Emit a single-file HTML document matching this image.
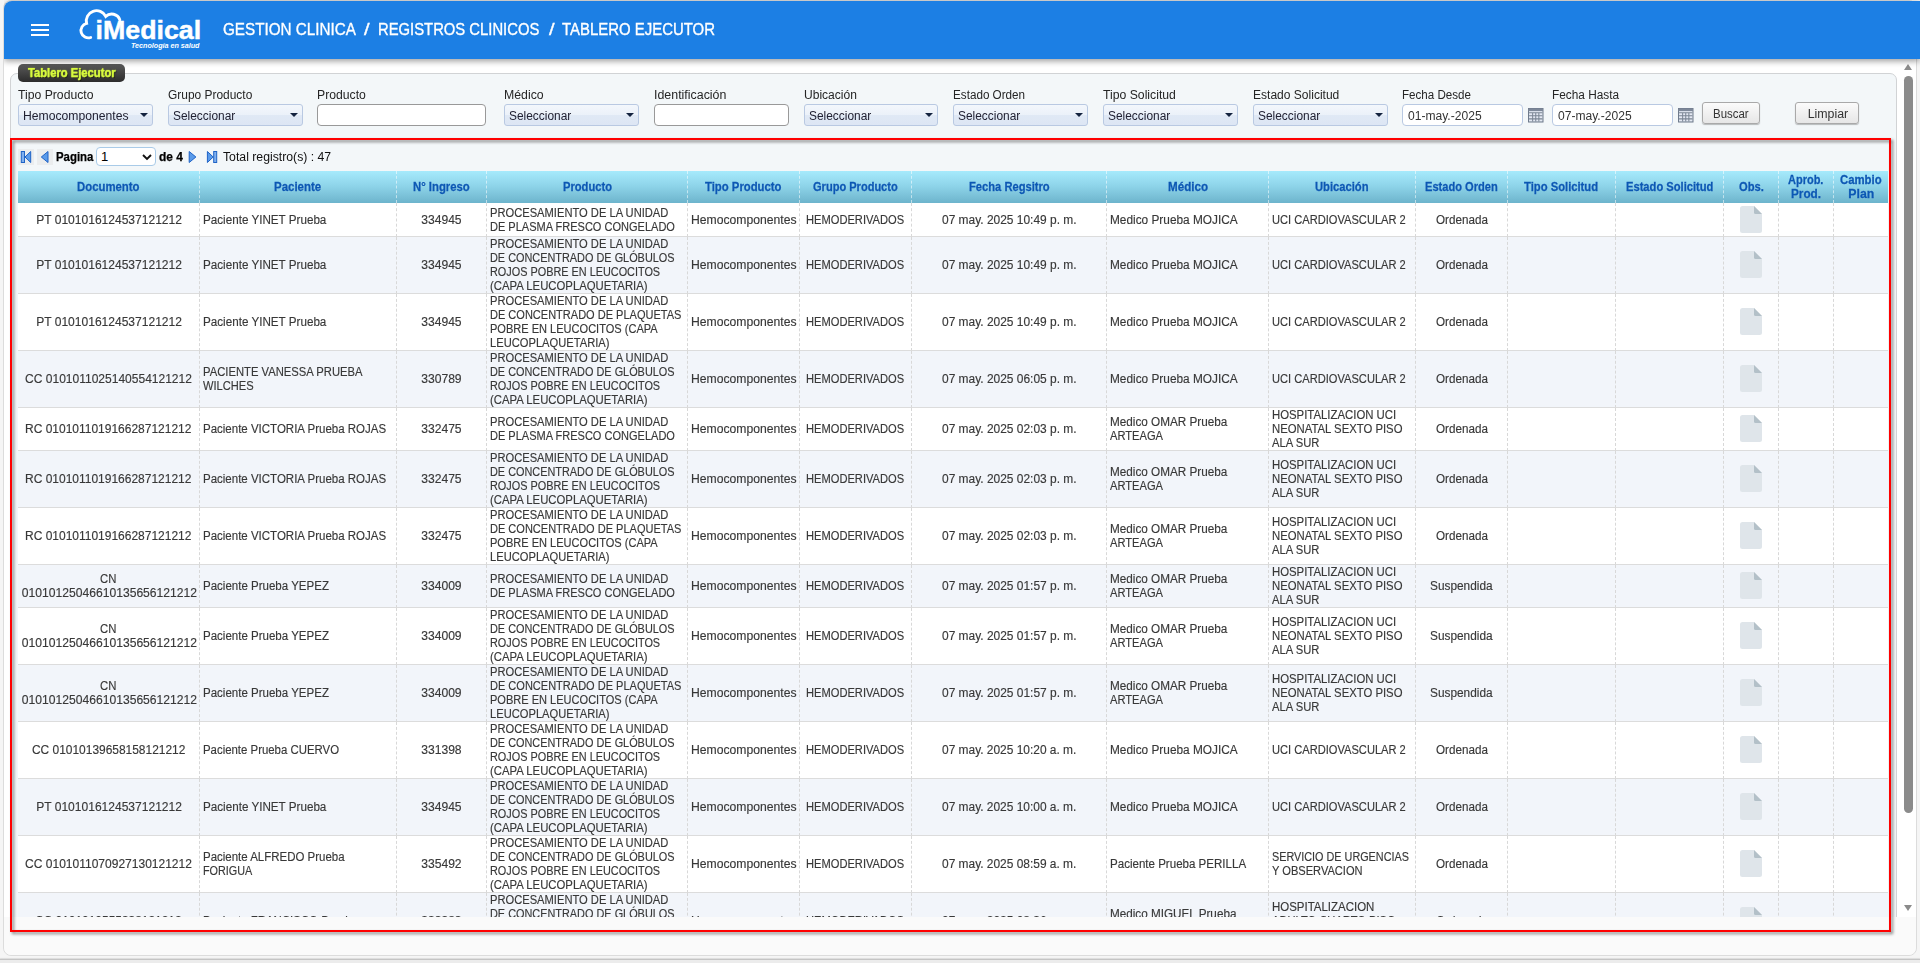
<!DOCTYPE html>
<html lang="es">
<head>
<meta charset="utf-8">
<title>Tablero Ejecutor</title>
<style>
*{box-sizing:border-box}
html,body{margin:0;padding:0}
body{width:1920px;height:963px;overflow:hidden;position:relative;background:#f5f5f5;font-family:"Liberation Sans",sans-serif;font-size:12px;color:#333}
#frame{position:absolute;left:3px;top:0;width:1914px;height:956px;background:#fafafa;border:1px solid #dcdcdc;border-radius:8px}
#botline{position:absolute;left:0;top:959px;width:1920px;height:4px;background:#ececec;border-top:1px solid #c4c4c4;box-shadow:0 -1px 1px rgba(0,0,0,.1)}
#view{position:absolute;left:4px;top:59px;width:1912px;height:858px;background:#fff;overflow:hidden}
#hdr{position:absolute;left:4px;top:1px;width:1916px;height:58px;background:#1c7fe4;border-top-left-radius:8px;box-shadow:0 2px 6px rgba(0,0,0,.4);clip-path:inset(-1px 0 -14px 0)}
#hdr .bar{position:absolute;left:27px;width:18px;height:2px;background:#fff}
#crumb{position:absolute;left:0;top:0;color:#fff;font-size:16.5px;line-height:20px;white-space:nowrap;-webkit-text-stroke:0.350px #fff}
#crumb>span{position:absolute;top:18px}
#logo{position:absolute;left:-4px;top:-1px}
#fs{position:absolute;left:10px;top:73px;width:1887px;height:870px;border:1px solid #d1d3d5;border-radius:7px;background:#f3f7f9}
#leg{position:absolute;left:18px;top:64px;width:107px;height:18px;border-radius:5px;background:linear-gradient(#5a5a5a,#2c2c2c);color:#d8fa3e;font-weight:bold;font-size:12px;line-height:18px;text-align:center;text-shadow:0 0 1.500px rgba(216,250,62,.85),1px 1px 1px rgba(0,0,0,.7);-webkit-text-stroke:0.250px #d8fa3e}
.lab{position:absolute;top:88px;font-size:12px;line-height:14px;white-space:nowrap;color:#252525}
.sel{position:absolute;top:104px;height:22px;border:1px solid #b9c9e2;border-radius:3px;background:linear-gradient(#f3f7fc 0%,#ebf1f9 50%,#e0e9f5 50%,#dde6f4 100%);font-size:12px;line-height:20px;padding:0.500px 0 0 4px;color:#223;white-space:nowrap}
.sel i{position:absolute;right:4.500px;top:7.500px;width:0;height:0;border-left:4px solid transparent;border-right:4px solid transparent;border-top:4.500px solid #14233f}
.inp{position:absolute;top:104px;height:22px;border:1px solid #999;border-radius:4px;background:#fff}
.dat{position:absolute;top:104px;height:22px;border:1px solid #b9c9e2;border-radius:4px;background:#fff;font-size:12px;line-height:23px;padding-left:5px;color:#333}
.cal{position:absolute;top:108px;width:15px;height:14px}
.cal svg{display:block}
.btn{position:absolute;top:102px;height:22px;border:1px solid #a9a9a9;border-radius:3px;background:linear-gradient(#fbfbfb,#e6e6e6);box-shadow:0 1px 1px rgba(0,0,0,.25);font-size:12px;line-height:22px;text-align:center;color:#333}
#pg{position:absolute;left:0;top:0}
#pg>b,#pg>span{position:absolute;top:150px;line-height:14px;white-space:nowrap;color:#111}
#pg>b{color:#000;-webkit-text-stroke:0.250px #000}
#pgsel{position:absolute;left:96px;top:147px;width:59.500px;height:18.500px;border:1px solid #a9cbe8;border-radius:4px;background:#fff;font-size:13px;line-height:17px;padding-left:4px;color:#000}
table{position:absolute;left:18px;top:171px;width:1870px;border-collapse:separate;border-spacing:0;table-layout:fixed;font-size:12px;line-height:14px}
th{height:32px;padding:0;background:linear-gradient(#a6eafc 0%,#8fd5ea 45%,#6db4cc 100%);color:#0b58b4;-webkit-text-stroke:0.300px #0b58b4;font-weight:bold;text-align:center;border-left:1px dashed rgba(255,255,255,.55);text-shadow:0 0 1px rgba(255,255,255,.5)}
th:first-child{border-left:0}
td{padding:0 2px 0 3px;border-left:1px dashed #d8d8d8;border-bottom:1px solid #dcdcdc;vertical-align:middle;white-space:nowrap;color:#383838;-webkit-text-stroke:0.150px #383838;overflow:hidden}
td:first-child{border-left:0}
td.c{text-align:center;padding:0}
.t{display:inline-block;white-space:nowrap;transform-origin:0 50%;vertical-align:top}
.b{font-weight:bold}
tr.o td{background:#fff}
tr.e td{background:#f2f5fa}
svg.doc{display:block;margin:0 auto;position:relative;left:-0.5px;top:-0.5px}
#red{position:absolute;left:10px;top:138px;width:1881px;height:794px;border:2px solid #ff0000;filter:drop-shadow(2.500px 2.500px 1.500px rgba(0,0,0,.5))}
#sb{position:absolute;left:1897px;top:0;width:15px;height:858px;background:#fff}
#thumb{position:absolute;left:1904px;top:76px;width:9px;height:737px;border-radius:4.5px;background:#8b8b8b}
.arr{position:absolute;left:1904px;width:0;height:0;border-left:4.5px solid transparent;border-right:4.5px solid transparent}
</style>
</head>
<body>
<div id="frame"></div>
<div id="botline"></div>
<div id="view"></div>
<div id="fs"></div>
<div id="leg"><span class="t b" style="width:87.6px;transform:scaleX(0.9339)">Tablero Ejecutor</span></div>
<div class="lab" style="left:18px"><span class="t" style="width:75.5px;transform:scaleX(1.0168)">Tipo Producto</span></div>
<div class="sel" style="left:18px;width:135px"><span class="t" style="width:105.6px;transform:scaleX(1.0144)">Hemocomponentes</span><i></i></div>
<div class="lab" style="left:168px"><span class="t" style="width:84.3px;transform:scaleX(0.9949)">Grupo Producto</span></div>
<div class="sel" style="left:168px;width:135px"><span class="t" style="width:62.3px;transform:scaleX(0.9931)">Seleccionar</span><i></i></div>
<div class="lab" style="left:317px"><span class="t" style="width:48.9px;transform:scaleX(1.0180)">Producto</span></div>
<div class="inp" style="left:317px;width:169px"></div>
<div class="lab" style="left:504px"><span class="t" style="width:39.6px;transform:scaleX(1.0246)">Médico</span></div>
<div class="sel" style="left:504px;width:135px"><span class="t" style="width:62.3px;transform:scaleX(0.9931)">Seleccionar</span><i></i></div>
<div class="lab" style="left:654px"><span class="t" style="width:72.4px;transform:scaleX(1.0334)">Identificación</span></div>
<div class="inp" style="left:654px;width:135px"></div>
<div class="lab" style="left:804px"><span class="t" style="width:52.9px;transform:scaleX(1.0036)">Ubicación</span></div>
<div class="sel" style="left:804px;width:134px"><span class="t" style="width:62.3px;transform:scaleX(0.9931)">Seleccionar</span><i></i></div>
<div class="lab" style="left:953px"><span class="t" style="width:72.1px;transform:scaleX(0.9736)">Estado Orden</span></div>
<div class="sel" style="left:953px;width:135px"><span class="t" style="width:62.3px;transform:scaleX(0.9931)">Seleccionar</span><i></i></div>
<div class="lab" style="left:1103px"><span class="t" style="width:72.9px;transform:scaleX(1.0182)">Tipo Solicitud</span></div>
<div class="sel" style="left:1103px;width:135px"><span class="t" style="width:62.3px;transform:scaleX(0.9931)">Seleccionar</span><i></i></div>
<div class="lab" style="left:1253px"><span class="t" style="width:86.3px;transform:scaleX(1.0029)">Estado Solicitud</span></div>
<div class="sel" style="left:1253px;width:135px"><span class="t" style="width:62.3px;transform:scaleX(0.9931)">Seleccionar</span><i></i></div>
<div class="lab" style="left:1402px"><span class="t" style="width:68.9px;transform:scaleX(0.9656)">Fecha Desde</span></div>
<div class="dat" style="left:1402px;width:121px"><span class="t" style="width:73.6px;transform:scaleX(1.0061)">01-may.-2025</span></div><div class="cal" style="left:1528px"><svg width="15.500" height="14.500" viewBox="0 0 15 14" preserveAspectRatio="none"><rect x="0.5" y="0.5" width="14" height="13" fill="#e4e9f3" stroke="#6f7b8c"/><rect x="0.500" y="0.500" width="14" height="2.500" fill="#7d8899"/><g stroke="#7a8594" stroke-width="1"><path d="M1 4.5H14M1 7.5H14M1 10.5H14M4.5 4V13M7.5 4V13M10.5 4V13"/></g></svg></div>
<div class="lab" style="left:1552px"><span class="t" style="width:67.1px;transform:scaleX(0.9860)">Fecha Hasta</span></div>
<div class="dat" style="left:1552px;width:121px"><span class="t" style="width:73.6px;transform:scaleX(1.0061)">07-may.-2025</span></div><div class="cal" style="left:1678px"><svg width="15.500" height="14.500" viewBox="0 0 15 14" preserveAspectRatio="none"><rect x="0.5" y="0.5" width="14" height="13" fill="#e4e9f3" stroke="#6f7b8c"/><rect x="0.500" y="0.500" width="14" height="2.500" fill="#7d8899"/><g stroke="#7a8594" stroke-width="1"><path d="M1 4.5H14M1 7.5H14M1 10.5H14M4.5 4V13M7.5 4V13M10.5 4V13"/></g></svg></div>
<div class="btn" style="left:1702px;width:58px"><span class="t" style="width:35.6px;transform:scaleX(0.9529)">Buscar</span></div>
<div class="btn" style="left:1795px;width:64px"><span class="t" style="width:40.6px;transform:scaleX(1.0315)">Limpiar</span></div>
<div id="pg">
<svg style="position:absolute;left:18px;top:149px" width="16" height="16" viewBox="0 0 16 16"><rect width="16" height="16" fill="#ebedee"/><rect x="3.300" y="2.500" width="3.200" height="11" fill="#7fb0ee" stroke="#1f63c6" stroke-width="1"/><path d="M12.700 2.500L7 8L12.700 13.500Z" fill="#5a9bea" stroke="#1f63c6" stroke-width="1" stroke-linejoin="round"/></svg>
<svg style="position:absolute;left:37px;top:149px" width="16" height="16" viewBox="0 0 16 16"><rect width="16" height="16" fill="#ebedee"/><path d="M11 2.500L4.300 8L11 13.500Z" fill="#5a9bea" stroke="#1f63c6" stroke-width="1" stroke-linejoin="round"/></svg>
<b style="left:56px"><span class="t b" style="width:37.4px;transform:scaleX(0.9502)">Pagina</span></b>
<div id="pgsel">1<svg style="position:absolute;left:45px;top:5.500px" width="10" height="7" viewBox="0 0 10 7"><path d="M1 1L5 5L9 1" fill="none" stroke="#111" stroke-width="1.900"/></svg></div>
<b style="left:158.500px"><span class="t b" style="width:23.9px;transform:scaleX(0.9952)">de 4</span></b>
<svg style="position:absolute;left:186px;top:149px" width="16" height="16" viewBox="0 0 16 16"><path d="M3.200 2.500L9.900 8L3.200 13.500Z" fill="#5a9bea" stroke="#1f63c6" stroke-width="1" stroke-linejoin="round"/></svg>
<svg style="position:absolute;left:205px;top:149px" width="16" height="16" viewBox="0 0 16 16"><rect x="8.700" y="2.500" width="3" height="11" fill="#7fb0ee" stroke="#1f63c6" stroke-width="1"/><path d="M2.400 2.500L8.200 8L2.400 13.500Z" fill="#5a9bea" stroke="#1f63c6" stroke-width="1" stroke-linejoin="round"/></svg>
<span style="left:223px"><span class="t" style="width:108.2px;transform:scaleX(1.0202)">Total registro(s) : 47</span></span>
</div>
<table>
<colgroup><col style="width:181px"><col style="width:197px"><col style="width:90px"><col style="width:201px"><col style="width:112px"><col style="width:112px"><col style="width:195px"><col style="width:162px"><col style="width:147px"><col style="width:92px"><col style="width:108px"><col style="width:108px"><col style="width:55px"><col style="width:55px"><col style="width:55px"></colgroup>
<thead><tr><th><span class="t b" style="width:62.5px;transform:scaleX(0.9470)">Documento</span></th><th><span class="t b" style="width:47.2px;transform:scaleX(0.9563)">Paciente</span></th><th><span class="t b" style="width:56.7px;transform:scaleX(0.9428)">N° Ingreso</span></th><th><span class="t b" style="width:49.0px;transform:scaleX(0.9303)">Producto</span></th><th><span class="t b" style="width:76.5px;transform:scaleX(0.9432)">Tipo Producto</span></th><th><span class="t b" style="width:84.7px;transform:scaleX(0.9207)">Grupo Producto</span></th><th><span class="t b" style="width:80.7px;transform:scaleX(0.9308)">Fecha Regsitro</span></th><th><span class="t b" style="width:40.0px;transform:scaleX(0.9675)">Médico</span></th><th><span class="t b" style="width:53.5px;transform:scaleX(0.9327)">Ubicación</span></th><th><span class="t b" style="width:72.8px;transform:scaleX(0.9252)">Estado Orden</span></th><th><span class="t b" style="width:74.1px;transform:scaleX(0.9367)">Tipo Solicitud</span></th><th><span class="t b" style="width:87.4px;transform:scaleX(0.9296)">Estado Solicitud</span></th><th><span class="t b" style="width:24.8px;transform:scaleX(0.9298)">Obs.</span></th><th><span class="t b" style="width:35.4px;transform:scaleX(0.9154)">Aprob.</span><br><span class="t b" style="width:30.0px;transform:scaleX(0.9781)">Prod.</span></th><th><span class="t b" style="width:41.6px;transform:scaleX(0.9451)">Cambio</span><br><span class="t b" style="width:26.0px;transform:scaleX(1.0259)">Plan</span></th></tr></thead>
<tbody>
<tr class="o" style="height:34px"><td class="c"><span class="t" style="width:145.7px;transform:scaleX(1.0032)">PT 0101016124537121212</span></td><td><span class="t" style="width:123.4px;transform:scaleX(0.9715)">Paciente YINET Prueba</span></td><td class="c"><span class="t" style="width:40.4px;transform:scaleX(1.0096)">334945</span></td><td><span class="t" style="width:178.4px;transform:scaleX(0.9298)">PROCESAMIENTO DE LA UNIDAD</span><br><span class="t" style="width:184.9px;transform:scaleX(0.9182)">DE PLASMA FRESCO CONGELADO</span></td><td><span class="t" style="width:105.6px;transform:scaleX(1.0144)">Hemocomponentes</span></td><td class="c"><span class="t" style="width:98.1px;transform:scaleX(0.9277)">HEMODERIVADOS</span></td><td class="c"><span class="t" style="width:134.6px;transform:scaleX(0.9955)">07 may. 2025 10:49 p. m.</span></td><td><span class="t" style="width:127.7px;transform:scaleX(0.9868)">Medico Prueba MOJICA</span></td><td><span class="t" style="width:133.8px;transform:scaleX(0.9260)">UCI CARDIOVASCULAR 2</span></td><td class="c"><span class="t" style="width:51.9px;transform:scaleX(0.9720)">Ordenada</span></td><td></td><td></td><td class="c"><svg class="doc" width="22" height="27" viewBox="0 0 22 27"><path d="M2.5 0H14L22 8V24.5Q22 27 19.5 27H2.5Q0 27 0 24.5V2.5Q0 0 2.5 0Z" fill="#dfe5ea"/><path d="M14 0L22 8H15.500Q14 8 14 6.500Z" fill="#b3c0c8"/></svg></td><td></td><td></td></tr>
<tr class="e" style="height:57px"><td class="c"><span class="t" style="width:145.7px;transform:scaleX(1.0032)">PT 0101016124537121212</span></td><td><span class="t" style="width:123.4px;transform:scaleX(0.9715)">Paciente YINET Prueba</span></td><td class="c"><span class="t" style="width:40.4px;transform:scaleX(1.0096)">334945</span></td><td><span class="t" style="width:178.4px;transform:scaleX(0.9298)">PROCESAMIENTO DE LA UNIDAD</span><br><span class="t" style="width:184.5px;transform:scaleX(0.9074)">DE CONCENTRADO DE GLÓBULOS</span><br><span class="t" style="width:170.1px;transform:scaleX(0.9058)">ROJOS POBRE EN LEUCOCITOS</span><br><span class="t" style="width:157.6px;transform:scaleX(0.9439)">(CAPA LEUCOPLAQUETARIA)</span></td><td><span class="t" style="width:105.6px;transform:scaleX(1.0144)">Hemocomponentes</span></td><td class="c"><span class="t" style="width:98.1px;transform:scaleX(0.9277)">HEMODERIVADOS</span></td><td class="c"><span class="t" style="width:134.6px;transform:scaleX(0.9955)">07 may. 2025 10:49 p. m.</span></td><td><span class="t" style="width:127.7px;transform:scaleX(0.9868)">Medico Prueba MOJICA</span></td><td><span class="t" style="width:133.8px;transform:scaleX(0.9260)">UCI CARDIOVASCULAR 2</span></td><td class="c"><span class="t" style="width:51.9px;transform:scaleX(0.9720)">Ordenada</span></td><td></td><td></td><td class="c"><svg class="doc" width="22" height="27" viewBox="0 0 22 27"><path d="M2.5 0H14L22 8V24.5Q22 27 19.5 27H2.5Q0 27 0 24.5V2.5Q0 0 2.5 0Z" fill="#dfe5ea"/><path d="M14 0L22 8H15.500Q14 8 14 6.500Z" fill="#b3c0c8"/></svg></td><td></td><td></td></tr>
<tr class="o" style="height:57px"><td class="c"><span class="t" style="width:145.7px;transform:scaleX(1.0032)">PT 0101016124537121212</span></td><td><span class="t" style="width:123.4px;transform:scaleX(0.9715)">Paciente YINET Prueba</span></td><td class="c"><span class="t" style="width:40.4px;transform:scaleX(1.0096)">334945</span></td><td><span class="t" style="width:178.4px;transform:scaleX(0.9298)">PROCESAMIENTO DE LA UNIDAD</span><br><span class="t" style="width:191.4px;transform:scaleX(0.9181)">DE CONCENTRADO DE PLAQUETAS</span><br><span class="t" style="width:167.6px;transform:scaleX(0.9198)">POBRE EN LEUCOCITOS (CAPA</span><br><span class="t" style="width:119.5px;transform:scaleX(0.9298)">LEUCOPLAQUETARIA)</span></td><td><span class="t" style="width:105.6px;transform:scaleX(1.0144)">Hemocomponentes</span></td><td class="c"><span class="t" style="width:98.1px;transform:scaleX(0.9277)">HEMODERIVADOS</span></td><td class="c"><span class="t" style="width:134.6px;transform:scaleX(0.9955)">07 may. 2025 10:49 p. m.</span></td><td><span class="t" style="width:127.7px;transform:scaleX(0.9868)">Medico Prueba MOJICA</span></td><td><span class="t" style="width:133.8px;transform:scaleX(0.9260)">UCI CARDIOVASCULAR 2</span></td><td class="c"><span class="t" style="width:51.9px;transform:scaleX(0.9720)">Ordenada</span></td><td></td><td></td><td class="c"><svg class="doc" width="22" height="27" viewBox="0 0 22 27"><path d="M2.5 0H14L22 8V24.5Q22 27 19.5 27H2.5Q0 27 0 24.5V2.5Q0 0 2.5 0Z" fill="#dfe5ea"/><path d="M14 0L22 8H15.500Q14 8 14 6.500Z" fill="#b3c0c8"/></svg></td><td></td><td></td></tr>
<tr class="e" style="height:57px"><td class="c"><span class="t" style="width:166.8px;transform:scaleX(1.0013)">CC 0101011025140554121212</span></td><td><span class="t" style="width:159.5px;transform:scaleX(0.9369)">PACIENTE VANESSA PRUEBA</span><br><span class="t" style="width:50.7px;transform:scaleX(0.9266)">WILCHES</span></td><td class="c"><span class="t" style="width:40.4px;transform:scaleX(1.0096)">330789</span></td><td><span class="t" style="width:178.4px;transform:scaleX(0.9298)">PROCESAMIENTO DE LA UNIDAD</span><br><span class="t" style="width:184.5px;transform:scaleX(0.9074)">DE CONCENTRADO DE GLÓBULOS</span><br><span class="t" style="width:170.1px;transform:scaleX(0.9058)">ROJOS POBRE EN LEUCOCITOS</span><br><span class="t" style="width:157.6px;transform:scaleX(0.9439)">(CAPA LEUCOPLAQUETARIA)</span></td><td><span class="t" style="width:105.6px;transform:scaleX(1.0144)">Hemocomponentes</span></td><td class="c"><span class="t" style="width:98.1px;transform:scaleX(0.9277)">HEMODERIVADOS</span></td><td class="c"><span class="t" style="width:134.6px;transform:scaleX(0.9955)">07 may. 2025 06:05 p. m.</span></td><td><span class="t" style="width:127.7px;transform:scaleX(0.9868)">Medico Prueba MOJICA</span></td><td><span class="t" style="width:133.8px;transform:scaleX(0.9260)">UCI CARDIOVASCULAR 2</span></td><td class="c"><span class="t" style="width:51.9px;transform:scaleX(0.9720)">Ordenada</span></td><td></td><td></td><td class="c"><svg class="doc" width="22" height="27" viewBox="0 0 22 27"><path d="M2.5 0H14L22 8V24.5Q22 27 19.5 27H2.5Q0 27 0 24.5V2.5Q0 0 2.5 0Z" fill="#dfe5ea"/><path d="M14 0L22 8H15.500Q14 8 14 6.500Z" fill="#b3c0c8"/></svg></td><td></td><td></td></tr>
<tr class="o" style="height:43px"><td class="c"><span class="t" style="width:166.4px;transform:scaleX(0.9988)">RC 0101011019166287121212</span></td><td><span class="t" style="width:183.1px;transform:scaleX(0.9577)">Paciente VICTORIA Prueba ROJAS</span></td><td class="c"><span class="t" style="width:40.4px;transform:scaleX(1.0096)">332475</span></td><td><span class="t" style="width:178.4px;transform:scaleX(0.9298)">PROCESAMIENTO DE LA UNIDAD</span><br><span class="t" style="width:184.9px;transform:scaleX(0.9182)">DE PLASMA FRESCO CONGELADO</span></td><td><span class="t" style="width:105.6px;transform:scaleX(1.0144)">Hemocomponentes</span></td><td class="c"><span class="t" style="width:98.1px;transform:scaleX(0.9277)">HEMODERIVADOS</span></td><td class="c"><span class="t" style="width:134.6px;transform:scaleX(0.9955)">07 may. 2025 02:03 p. m.</span></td><td><span class="t" style="width:117.4px;transform:scaleX(0.9778)">Medico OMAR Prueba</span><br><span class="t" style="width:53.0px;transform:scaleX(0.9280)">ARTEAGA</span></td><td><span class="t" style="width:124.2px;transform:scaleX(0.9469)">HOSPITALIZACION UCI</span><br><span class="t" style="width:130.5px;transform:scaleX(0.9436)">NEONATAL SEXTO PISO</span><br><span class="t" style="width:47.4px;transform:scaleX(0.9343)">ALA SUR</span></td><td class="c"><span class="t" style="width:51.9px;transform:scaleX(0.9720)">Ordenada</span></td><td></td><td></td><td class="c"><svg class="doc" width="22" height="27" viewBox="0 0 22 27"><path d="M2.5 0H14L22 8V24.5Q22 27 19.5 27H2.5Q0 27 0 24.5V2.5Q0 0 2.5 0Z" fill="#dfe5ea"/><path d="M14 0L22 8H15.500Q14 8 14 6.500Z" fill="#b3c0c8"/></svg></td><td></td><td></td></tr>
<tr class="e" style="height:57px"><td class="c"><span class="t" style="width:166.4px;transform:scaleX(0.9988)">RC 0101011019166287121212</span></td><td><span class="t" style="width:183.1px;transform:scaleX(0.9577)">Paciente VICTORIA Prueba ROJAS</span></td><td class="c"><span class="t" style="width:40.4px;transform:scaleX(1.0096)">332475</span></td><td><span class="t" style="width:178.4px;transform:scaleX(0.9298)">PROCESAMIENTO DE LA UNIDAD</span><br><span class="t" style="width:184.5px;transform:scaleX(0.9074)">DE CONCENTRADO DE GLÓBULOS</span><br><span class="t" style="width:170.1px;transform:scaleX(0.9058)">ROJOS POBRE EN LEUCOCITOS</span><br><span class="t" style="width:157.6px;transform:scaleX(0.9439)">(CAPA LEUCOPLAQUETARIA)</span></td><td><span class="t" style="width:105.6px;transform:scaleX(1.0144)">Hemocomponentes</span></td><td class="c"><span class="t" style="width:98.1px;transform:scaleX(0.9277)">HEMODERIVADOS</span></td><td class="c"><span class="t" style="width:134.6px;transform:scaleX(0.9955)">07 may. 2025 02:03 p. m.</span></td><td><span class="t" style="width:117.4px;transform:scaleX(0.9778)">Medico OMAR Prueba</span><br><span class="t" style="width:53.0px;transform:scaleX(0.9280)">ARTEAGA</span></td><td><span class="t" style="width:124.2px;transform:scaleX(0.9469)">HOSPITALIZACION UCI</span><br><span class="t" style="width:130.5px;transform:scaleX(0.9436)">NEONATAL SEXTO PISO</span><br><span class="t" style="width:47.4px;transform:scaleX(0.9343)">ALA SUR</span></td><td class="c"><span class="t" style="width:51.9px;transform:scaleX(0.9720)">Ordenada</span></td><td></td><td></td><td class="c"><svg class="doc" width="22" height="27" viewBox="0 0 22 27"><path d="M2.5 0H14L22 8V24.5Q22 27 19.5 27H2.5Q0 27 0 24.5V2.5Q0 0 2.5 0Z" fill="#dfe5ea"/><path d="M14 0L22 8H15.500Q14 8 14 6.500Z" fill="#b3c0c8"/></svg></td><td></td><td></td></tr>
<tr class="o" style="height:57px"><td class="c"><span class="t" style="width:166.4px;transform:scaleX(0.9988)">RC 0101011019166287121212</span></td><td><span class="t" style="width:183.1px;transform:scaleX(0.9577)">Paciente VICTORIA Prueba ROJAS</span></td><td class="c"><span class="t" style="width:40.4px;transform:scaleX(1.0096)">332475</span></td><td><span class="t" style="width:178.4px;transform:scaleX(0.9298)">PROCESAMIENTO DE LA UNIDAD</span><br><span class="t" style="width:191.4px;transform:scaleX(0.9181)">DE CONCENTRADO DE PLAQUETAS</span><br><span class="t" style="width:167.6px;transform:scaleX(0.9198)">POBRE EN LEUCOCITOS (CAPA</span><br><span class="t" style="width:119.5px;transform:scaleX(0.9298)">LEUCOPLAQUETARIA)</span></td><td><span class="t" style="width:105.6px;transform:scaleX(1.0144)">Hemocomponentes</span></td><td class="c"><span class="t" style="width:98.1px;transform:scaleX(0.9277)">HEMODERIVADOS</span></td><td class="c"><span class="t" style="width:134.6px;transform:scaleX(0.9955)">07 may. 2025 02:03 p. m.</span></td><td><span class="t" style="width:117.4px;transform:scaleX(0.9778)">Medico OMAR Prueba</span><br><span class="t" style="width:53.0px;transform:scaleX(0.9280)">ARTEAGA</span></td><td><span class="t" style="width:124.2px;transform:scaleX(0.9469)">HOSPITALIZACION UCI</span><br><span class="t" style="width:130.5px;transform:scaleX(0.9436)">NEONATAL SEXTO PISO</span><br><span class="t" style="width:47.4px;transform:scaleX(0.9343)">ALA SUR</span></td><td class="c"><span class="t" style="width:51.9px;transform:scaleX(0.9720)">Ordenada</span></td><td></td><td></td><td class="c"><svg class="doc" width="22" height="27" viewBox="0 0 22 27"><path d="M2.5 0H14L22 8V24.5Q22 27 19.5 27H2.5Q0 27 0 24.5V2.5Q0 0 2.5 0Z" fill="#dfe5ea"/><path d="M14 0L22 8H15.500Q14 8 14 6.500Z" fill="#b3c0c8"/></svg></td><td></td><td></td></tr>
<tr class="e" style="height:43px"><td class="c"><span class="t" style="width:16.4px;transform:scaleX(0.9436)">CN</span><br><span class="t" style="width:175.2px;transform:scaleX(1.0096)">01010125046610135656121212</span></td><td><span class="t" style="width:125.9px;transform:scaleX(0.9599)">Paciente Prueba YEPEZ</span></td><td class="c"><span class="t" style="width:40.4px;transform:scaleX(1.0096)">334009</span></td><td><span class="t" style="width:178.4px;transform:scaleX(0.9298)">PROCESAMIENTO DE LA UNIDAD</span><br><span class="t" style="width:184.9px;transform:scaleX(0.9182)">DE PLASMA FRESCO CONGELADO</span></td><td><span class="t" style="width:105.6px;transform:scaleX(1.0144)">Hemocomponentes</span></td><td class="c"><span class="t" style="width:98.1px;transform:scaleX(0.9277)">HEMODERIVADOS</span></td><td class="c"><span class="t" style="width:134.6px;transform:scaleX(0.9955)">07 may. 2025 01:57 p. m.</span></td><td><span class="t" style="width:117.4px;transform:scaleX(0.9778)">Medico OMAR Prueba</span><br><span class="t" style="width:53.0px;transform:scaleX(0.9280)">ARTEAGA</span></td><td><span class="t" style="width:124.2px;transform:scaleX(0.9469)">HOSPITALIZACION UCI</span><br><span class="t" style="width:130.5px;transform:scaleX(0.9436)">NEONATAL SEXTO PISO</span><br><span class="t" style="width:47.4px;transform:scaleX(0.9343)">ALA SUR</span></td><td class="c"><span class="t" style="width:62.6px;transform:scaleX(0.9876)">Suspendida</span></td><td></td><td></td><td class="c"><svg class="doc" width="22" height="27" viewBox="0 0 22 27"><path d="M2.5 0H14L22 8V24.5Q22 27 19.5 27H2.5Q0 27 0 24.5V2.5Q0 0 2.5 0Z" fill="#dfe5ea"/><path d="M14 0L22 8H15.500Q14 8 14 6.500Z" fill="#b3c0c8"/></svg></td><td></td><td></td></tr>
<tr class="o" style="height:57px"><td class="c"><span class="t" style="width:16.4px;transform:scaleX(0.9436)">CN</span><br><span class="t" style="width:175.2px;transform:scaleX(1.0096)">01010125046610135656121212</span></td><td><span class="t" style="width:125.9px;transform:scaleX(0.9599)">Paciente Prueba YEPEZ</span></td><td class="c"><span class="t" style="width:40.4px;transform:scaleX(1.0096)">334009</span></td><td><span class="t" style="width:178.4px;transform:scaleX(0.9298)">PROCESAMIENTO DE LA UNIDAD</span><br><span class="t" style="width:184.5px;transform:scaleX(0.9074)">DE CONCENTRADO DE GLÓBULOS</span><br><span class="t" style="width:170.1px;transform:scaleX(0.9058)">ROJOS POBRE EN LEUCOCITOS</span><br><span class="t" style="width:157.6px;transform:scaleX(0.9439)">(CAPA LEUCOPLAQUETARIA)</span></td><td><span class="t" style="width:105.6px;transform:scaleX(1.0144)">Hemocomponentes</span></td><td class="c"><span class="t" style="width:98.1px;transform:scaleX(0.9277)">HEMODERIVADOS</span></td><td class="c"><span class="t" style="width:134.6px;transform:scaleX(0.9955)">07 may. 2025 01:57 p. m.</span></td><td><span class="t" style="width:117.4px;transform:scaleX(0.9778)">Medico OMAR Prueba</span><br><span class="t" style="width:53.0px;transform:scaleX(0.9280)">ARTEAGA</span></td><td><span class="t" style="width:124.2px;transform:scaleX(0.9469)">HOSPITALIZACION UCI</span><br><span class="t" style="width:130.5px;transform:scaleX(0.9436)">NEONATAL SEXTO PISO</span><br><span class="t" style="width:47.4px;transform:scaleX(0.9343)">ALA SUR</span></td><td class="c"><span class="t" style="width:62.6px;transform:scaleX(0.9876)">Suspendida</span></td><td></td><td></td><td class="c"><svg class="doc" width="22" height="27" viewBox="0 0 22 27"><path d="M2.5 0H14L22 8V24.5Q22 27 19.5 27H2.5Q0 27 0 24.5V2.5Q0 0 2.5 0Z" fill="#dfe5ea"/><path d="M14 0L22 8H15.500Q14 8 14 6.500Z" fill="#b3c0c8"/></svg></td><td></td><td></td></tr>
<tr class="e" style="height:57px"><td class="c"><span class="t" style="width:16.4px;transform:scaleX(0.9436)">CN</span><br><span class="t" style="width:175.2px;transform:scaleX(1.0096)">01010125046610135656121212</span></td><td><span class="t" style="width:125.9px;transform:scaleX(0.9599)">Paciente Prueba YEPEZ</span></td><td class="c"><span class="t" style="width:40.4px;transform:scaleX(1.0096)">334009</span></td><td><span class="t" style="width:178.4px;transform:scaleX(0.9298)">PROCESAMIENTO DE LA UNIDAD</span><br><span class="t" style="width:191.4px;transform:scaleX(0.9181)">DE CONCENTRADO DE PLAQUETAS</span><br><span class="t" style="width:167.6px;transform:scaleX(0.9198)">POBRE EN LEUCOCITOS (CAPA</span><br><span class="t" style="width:119.5px;transform:scaleX(0.9298)">LEUCOPLAQUETARIA)</span></td><td><span class="t" style="width:105.6px;transform:scaleX(1.0144)">Hemocomponentes</span></td><td class="c"><span class="t" style="width:98.1px;transform:scaleX(0.9277)">HEMODERIVADOS</span></td><td class="c"><span class="t" style="width:134.6px;transform:scaleX(0.9955)">07 may. 2025 01:57 p. m.</span></td><td><span class="t" style="width:117.4px;transform:scaleX(0.9778)">Medico OMAR Prueba</span><br><span class="t" style="width:53.0px;transform:scaleX(0.9280)">ARTEAGA</span></td><td><span class="t" style="width:124.2px;transform:scaleX(0.9469)">HOSPITALIZACION UCI</span><br><span class="t" style="width:130.5px;transform:scaleX(0.9436)">NEONATAL SEXTO PISO</span><br><span class="t" style="width:47.4px;transform:scaleX(0.9343)">ALA SUR</span></td><td class="c"><span class="t" style="width:62.6px;transform:scaleX(0.9876)">Suspendida</span></td><td></td><td></td><td class="c"><svg class="doc" width="22" height="27" viewBox="0 0 22 27"><path d="M2.5 0H14L22 8V24.5Q22 27 19.5 27H2.5Q0 27 0 24.5V2.5Q0 0 2.5 0Z" fill="#dfe5ea"/><path d="M14 0L22 8H15.500Q14 8 14 6.500Z" fill="#b3c0c8"/></svg></td><td></td><td></td></tr>
<tr class="o" style="height:57px"><td class="c"><span class="t" style="width:153.4px;transform:scaleX(0.9948)">CC 01010139658158121212</span></td><td><span class="t" style="width:136.0px;transform:scaleX(0.9500)">Paciente Prueba CUERVO</span></td><td class="c"><span class="t" style="width:40.4px;transform:scaleX(1.0096)">331398</span></td><td><span class="t" style="width:178.4px;transform:scaleX(0.9298)">PROCESAMIENTO DE LA UNIDAD</span><br><span class="t" style="width:184.5px;transform:scaleX(0.9074)">DE CONCENTRADO DE GLÓBULOS</span><br><span class="t" style="width:170.1px;transform:scaleX(0.9058)">ROJOS POBRE EN LEUCOCITOS</span><br><span class="t" style="width:157.6px;transform:scaleX(0.9439)">(CAPA LEUCOPLAQUETARIA)</span></td><td><span class="t" style="width:105.6px;transform:scaleX(1.0144)">Hemocomponentes</span></td><td class="c"><span class="t" style="width:98.1px;transform:scaleX(0.9277)">HEMODERIVADOS</span></td><td class="c"><span class="t" style="width:134.4px;transform:scaleX(0.9939)">07 may. 2025 10:20 a. m.</span></td><td><span class="t" style="width:127.7px;transform:scaleX(0.9868)">Medico Prueba MOJICA</span></td><td><span class="t" style="width:133.8px;transform:scaleX(0.9260)">UCI CARDIOVASCULAR 2</span></td><td class="c"><span class="t" style="width:51.9px;transform:scaleX(0.9720)">Ordenada</span></td><td></td><td></td><td class="c"><svg class="doc" width="22" height="27" viewBox="0 0 22 27"><path d="M2.5 0H14L22 8V24.5Q22 27 19.5 27H2.5Q0 27 0 24.5V2.5Q0 0 2.5 0Z" fill="#dfe5ea"/><path d="M14 0L22 8H15.500Q14 8 14 6.500Z" fill="#b3c0c8"/></svg></td><td></td><td></td></tr>
<tr class="e" style="height:57px"><td class="c"><span class="t" style="width:145.7px;transform:scaleX(1.0032)">PT 0101016124537121212</span></td><td><span class="t" style="width:123.4px;transform:scaleX(0.9715)">Paciente YINET Prueba</span></td><td class="c"><span class="t" style="width:40.4px;transform:scaleX(1.0096)">334945</span></td><td><span class="t" style="width:178.4px;transform:scaleX(0.9298)">PROCESAMIENTO DE LA UNIDAD</span><br><span class="t" style="width:184.5px;transform:scaleX(0.9074)">DE CONCENTRADO DE GLÓBULOS</span><br><span class="t" style="width:170.1px;transform:scaleX(0.9058)">ROJOS POBRE EN LEUCOCITOS</span><br><span class="t" style="width:157.6px;transform:scaleX(0.9439)">(CAPA LEUCOPLAQUETARIA)</span></td><td><span class="t" style="width:105.6px;transform:scaleX(1.0144)">Hemocomponentes</span></td><td class="c"><span class="t" style="width:98.1px;transform:scaleX(0.9277)">HEMODERIVADOS</span></td><td class="c"><span class="t" style="width:134.4px;transform:scaleX(0.9939)">07 may. 2025 10:00 a. m.</span></td><td><span class="t" style="width:127.7px;transform:scaleX(0.9868)">Medico Prueba MOJICA</span></td><td><span class="t" style="width:133.8px;transform:scaleX(0.9260)">UCI CARDIOVASCULAR 2</span></td><td class="c"><span class="t" style="width:51.9px;transform:scaleX(0.9720)">Ordenada</span></td><td></td><td></td><td class="c"><svg class="doc" width="22" height="27" viewBox="0 0 22 27"><path d="M2.5 0H14L22 8V24.5Q22 27 19.5 27H2.5Q0 27 0 24.5V2.5Q0 0 2.5 0Z" fill="#dfe5ea"/><path d="M14 0L22 8H15.500Q14 8 14 6.500Z" fill="#b3c0c8"/></svg></td><td></td><td></td></tr>
<tr class="o" style="height:57px"><td class="c"><span class="t" style="width:166.8px;transform:scaleX(1.0013)">CC 0101011070927130121212</span></td><td><span class="t" style="width:141.6px;transform:scaleX(0.9562)">Paciente ALFREDO Prueba</span><br><span class="t" style="width:49.3px;transform:scaleX(0.9021)">FORIGUA</span></td><td class="c"><span class="t" style="width:40.4px;transform:scaleX(1.0096)">335492</span></td><td><span class="t" style="width:178.4px;transform:scaleX(0.9298)">PROCESAMIENTO DE LA UNIDAD</span><br><span class="t" style="width:184.5px;transform:scaleX(0.9074)">DE CONCENTRADO DE GLÓBULOS</span><br><span class="t" style="width:170.1px;transform:scaleX(0.9058)">ROJOS POBRE EN LEUCOCITOS</span><br><span class="t" style="width:157.6px;transform:scaleX(0.9439)">(CAPA LEUCOPLAQUETARIA)</span></td><td><span class="t" style="width:105.6px;transform:scaleX(1.0144)">Hemocomponentes</span></td><td class="c"><span class="t" style="width:98.1px;transform:scaleX(0.9277)">HEMODERIVADOS</span></td><td class="c"><span class="t" style="width:134.4px;transform:scaleX(0.9939)">07 may. 2025 08:59 a. m.</span></td><td><span class="t" style="width:136.1px;transform:scaleX(0.9626)">Paciente Prueba PERILLA</span></td><td><span class="t" style="width:136.9px;transform:scaleX(0.9019)">SERVICIO DE URGENCIAS</span><br><span class="t" style="width:90.6px;transform:scaleX(0.9237)">Y OBSERVACION</span></td><td class="c"><span class="t" style="width:51.9px;transform:scaleX(0.9720)">Ordenada</span></td><td></td><td></td><td class="c"><svg class="doc" width="22" height="27" viewBox="0 0 22 27"><path d="M2.5 0H14L22 8V24.5Q22 27 19.5 27H2.5Q0 27 0 24.5V2.5Q0 0 2.5 0Z" fill="#dfe5ea"/><path d="M14 0L22 8H15.500Q14 8 14 6.500Z" fill="#b3c0c8"/></svg></td><td></td><td></td></tr>
<tr class="e" style="height:57px"><td class="c"><span class="t" style="width:146.6px;transform:scaleX(0.9942)">CC 0101010555338121212</span></td><td><span class="t" style="width:155.0px;transform:scaleX(0.9525)">Paciente FRANCISCO Prueba</span></td><td class="c"><span class="t" style="width:40.4px;transform:scaleX(1.0096)">333383</span></td><td><span class="t" style="width:178.4px;transform:scaleX(0.9298)">PROCESAMIENTO DE LA UNIDAD</span><br><span class="t" style="width:184.5px;transform:scaleX(0.9074)">DE CONCENTRADO DE GLÓBULOS</span><br><span class="t" style="width:170.1px;transform:scaleX(0.9058)">ROJOS POBRE EN LEUCOCITOS</span><br><span class="t" style="width:157.6px;transform:scaleX(0.9439)">(CAPA LEUCOPLAQUETARIA)</span></td><td><span class="t" style="width:105.6px;transform:scaleX(1.0144)">Hemocomponentes</span></td><td class="c"><span class="t" style="width:98.1px;transform:scaleX(0.9277)">HEMODERIVADOS</span></td><td class="c"><span class="t" style="width:134.4px;transform:scaleX(0.9939)">07 may. 2025 08:36 a. m.</span></td><td><span class="t" style="width:126.4px;transform:scaleX(0.9753)">Medico MIGUEL Prueba</span><br><span class="t" style="width:37.2px;transform:scaleX(0.9298)">ROJAS</span></td><td><span class="t" style="width:102.4px;transform:scaleX(0.9554)">HOSPITALIZACION</span><br><span class="t" style="width:123.7px;transform:scaleX(0.9291)">ADULTO CUARTO PISO</span><br><span class="t" style="width:47.4px;transform:scaleX(0.9343)">ALA SUR</span></td><td class="c"><span class="t" style="width:51.9px;transform:scaleX(0.9720)">Ordenada</span></td><td></td><td></td><td class="c"><svg class="doc" width="22" height="27" viewBox="0 0 22 27"><path d="M2.5 0H14L22 8V24.5Q22 27 19.5 27H2.5Q0 27 0 24.5V2.5Q0 0 2.5 0Z" fill="#dfe5ea"/><path d="M14 0L22 8H15.500Q14 8 14 6.500Z" fill="#b3c0c8"/></svg></td><td></td><td></td></tr>
</tbody>
</table>
<div id="mask" style="position:absolute;left:4px;top:917px;width:1912px;height:38px;background:#fafafa;border-radius:0 0 8px 8px"></div>
<div id="sbtrack" style="position:absolute;left:1898px;top:59px;width:18px;height:858px;background:#fff"></div>
<div id="thumb"></div>
<div class="arr" style="top:64px;border-bottom:6px solid #8b8b8b"></div>
<div class="arr" style="top:905px;border-top:6px solid #8b8b8b"></div>
<div id="red"></div>
<div id="hdr">
<div class="bar" style="top:23px"></div><div class="bar" style="top:28px"></div><div class="bar" style="top:33px"></div>
<svg id="logo" width="220" height="60" viewBox="0 0 220 60">
<path d="M90.700 37.500A7.350 7.350 0 1 1 86.600 23.400A10.250 10.250 0 0 1 105.740 16.400A8.600 8.600 0 0 1 119.800 19.800" fill="none" stroke="#fff" stroke-width="2.900" stroke-linecap="round"/>
<text x="95.600" y="38.600" fill="#fff" font-family="Liberation Sans, sans-serif" font-weight="bold" font-size="25.500" stroke="#fff" stroke-width="0.450" textLength="105.500" lengthAdjust="spacingAndGlyphs">iMedical</text>
<text x="131" y="47.500" fill="#fff" font-family="Liberation Sans, sans-serif" font-weight="bold" font-style="italic" font-size="7.500" textLength="68.500" lengthAdjust="spacingAndGlyphs">Tecnología en salud</text>
</svg>
<div id="crumb"><span style="left:218.800px"><span class="t" style="width:132.8px;transform:scaleX(0.9225);font-size:16.5px">GESTION CLINICA</span></span><span style="left:360px"><span class="t" style="width:5.6px;transform:scaleX(1.2190);font-size:16.5px">/</span></span><span style="left:374px"><span class="t" style="width:161.3px;transform:scaleX(0.8976);font-size:16.5px">REGISTROS CLINICOS</span></span><span style="left:545px"><span class="t" style="width:5.6px;transform:scaleX(1.2190);font-size:16.5px">/</span></span><span style="left:557.700px"><span class="t" style="width:153.0px;transform:scaleX(0.9052);font-size:16.5px">TABLERO EJECUTOR</span></span></div>
</div>
</body>
</html>
